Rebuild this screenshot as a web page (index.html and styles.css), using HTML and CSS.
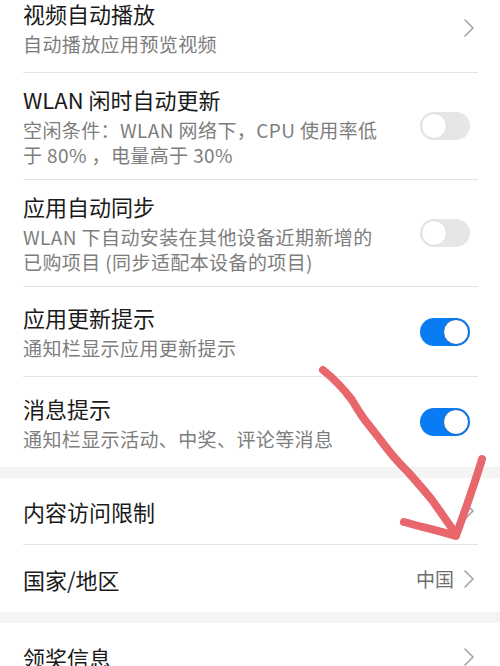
FILE: index.html
```html
<!DOCTYPE html>
<html lang="zh-CN">
<head>
<meta charset="utf-8">
<title>设置</title>
<link rel="stylesheet" href="styles.css">
</head>
<body>
<div class="page">
  <div class="group first">
    <div class="item">
      <div class="inner two">
        <div class="text">
          <div class="title">视频自动播放</div>
          <div class="sub">自动播放应用预览视频</div>
        </div>
        <svg class="chev" viewBox="0 0 10 18" width="10" height="18"><polyline points="1,1 9,9 1,17"/></svg>
      </div>
    </div>
    <div class="item">
      <div class="inner three">
        <div class="text">
          <div class="title">WLAN 闲时自动更新</div>
          <div class="sub">空闲条件：WLAN 网络下，CPU 使用率低<br>于 80% ，电量高于 30%</div>
        </div>
        <span class="toggle"><span class="knob"></span></span>
      </div>
    </div>
    <div class="item">
      <div class="inner three">
        <div class="text">
          <div class="title">应用自动同步</div>
          <div class="sub">WLAN 下自动安装在其他设备近期新增的<br>已购项目 (同步适配本设备的项目)</div>
        </div>
        <span class="toggle"><span class="knob"></span></span>
      </div>
    </div>
    <div class="item">
      <div class="inner two">
        <div class="text">
          <div class="title">应用更新提示</div>
          <div class="sub">通知栏显示应用更新提示</div>
        </div>
        <span class="toggle on"><span class="knob"></span></span>
      </div>
    </div>
    <div class="item last">
      <div class="inner two">
        <div class="text">
          <div class="title">消息提示</div>
          <div class="sub">通知栏显示活动、中奖、评论等消息</div>
        </div>
        <span class="toggle on"><span class="knob"></span></span>
      </div>
    </div>
  </div>
  <div class="band"></div>
  <div class="group">
    <div class="item">
      <div class="inner one">
        <div class="text"><div class="title">内容访问限制</div></div>
        <svg class="chev" viewBox="0 0 10 18" width="10" height="18"><polyline points="1,1 9,9 1,17"/></svg>
      </div>
    </div>
    <div class="item last">
      <div class="inner one">
        <div class="text"><div class="title">国家/地区</div></div>
        <span class="value">中国</span>
        <svg class="chev" viewBox="0 0 10 18" width="10" height="18"><polyline points="1,1 9,9 1,17"/></svg>
      </div>
    </div>
  </div>
  <div class="band"></div>
  <div class="group">
    <div class="item last">
      <div class="inner one">
        <div class="text"><div class="title">领奖信息</div></div>
        <svg class="chev" viewBox="0 0 10 18" width="10" height="18"><polyline points="1,1 9,9 1,17"/></svg>
      </div>
    </div>
  </div>
</div>
<svg class="scribble" viewBox="0 0 500 666" width="500" height="666">
  <path d="M323 370 C 333 378, 343 388, 352 400 C 358 410, 362 417, 368 424 C 376 434, 382 442, 389 451 C 396 460, 402 466, 408 472 C 416 481, 424 490, 432 500 C 440 511, 448 523, 456 534"/>
  <path d="M482 459 C 476 480, 467 505, 457 533"/>
  <path d="M404 522 C 422 527, 440 531, 456 536"/>
</svg>
</body>
</html>
```
FILE: styles.css
```css
html, body {
  margin: 0;
  padding: 0;
  background: #ffffff;
}
body {
  width: 500px;
  height: 666px;
  overflow: hidden;
  position: relative;
  font-family: "Noto Sans CJK SC", "Noto Sans", "Liberation Sans", sans-serif;
}
.page {
  display: flex;
  flex-direction: column;
}
.group.first {
  margin-top: -17px;
}
.band {
  height: 11px;
  background: #f4f4f4;
}
.inner {
  margin: 0 22px 0 23px;
  display: flex;
  align-items: center;
  box-sizing: border-box;
  border-bottom: 1px solid #e4e4e4;
}
.item.last .inner {
  border-bottom: none;
}
.inner.two {
  min-height: 90px;
}
.inner.three {
  padding: 12px 0;
  min-height: 107px;
}
.inner.one {
  min-height: 67px;
}
.text {
  flex: 1;
  min-width: 0;
}
.title {
  font-size: 22px;
  line-height: 28px;
  color: #1a1a1a;
}
.inner.two .title,
.inner.three .title {
  margin-bottom: 4px;
}
.sub {
  font-size: 19px;
  line-height: 25px;
  letter-spacing: 0.4px;
  color: #7d7d7d;
}
.chev {
  flex: none;
  margin-right: 4px;
}
.chev polyline {
  fill: none;
  stroke: #a3a3a3;
  stroke-width: 1.6;
  stroke-linecap: round;
  stroke-linejoin: round;
}
.value {
  font-size: 19px;
  color: #6e6e6e;
  margin-right: 10px;
}
.toggle {
  flex: none;
  width: 50px;
  height: 28px;
  border-radius: 14px;
  background: #e6e6e6;
  margin-right: 8px;
  display: flex;
  align-items: center;
  padding: 1px;
  box-sizing: border-box;
}
.knob {
  width: 26px;
  height: 26px;
  border-radius: 50%;
  background: #ffffff;
  box-sizing: border-box;
  border: 1px solid #dcdcdc;
}
.toggle.on {
  background: #0a7cf3;
  justify-content: flex-end;
}
.toggle.on .knob {
  border-color: #1060c0;
}
.scribble {
  position: absolute;
  left: 0;
  top: 0;
  pointer-events: none;
}
.scribble path {
  fill: none;
  stroke: #e8676d;
  stroke-width: 8;
  stroke-linecap: round;
  stroke-linejoin: round;
}
```
